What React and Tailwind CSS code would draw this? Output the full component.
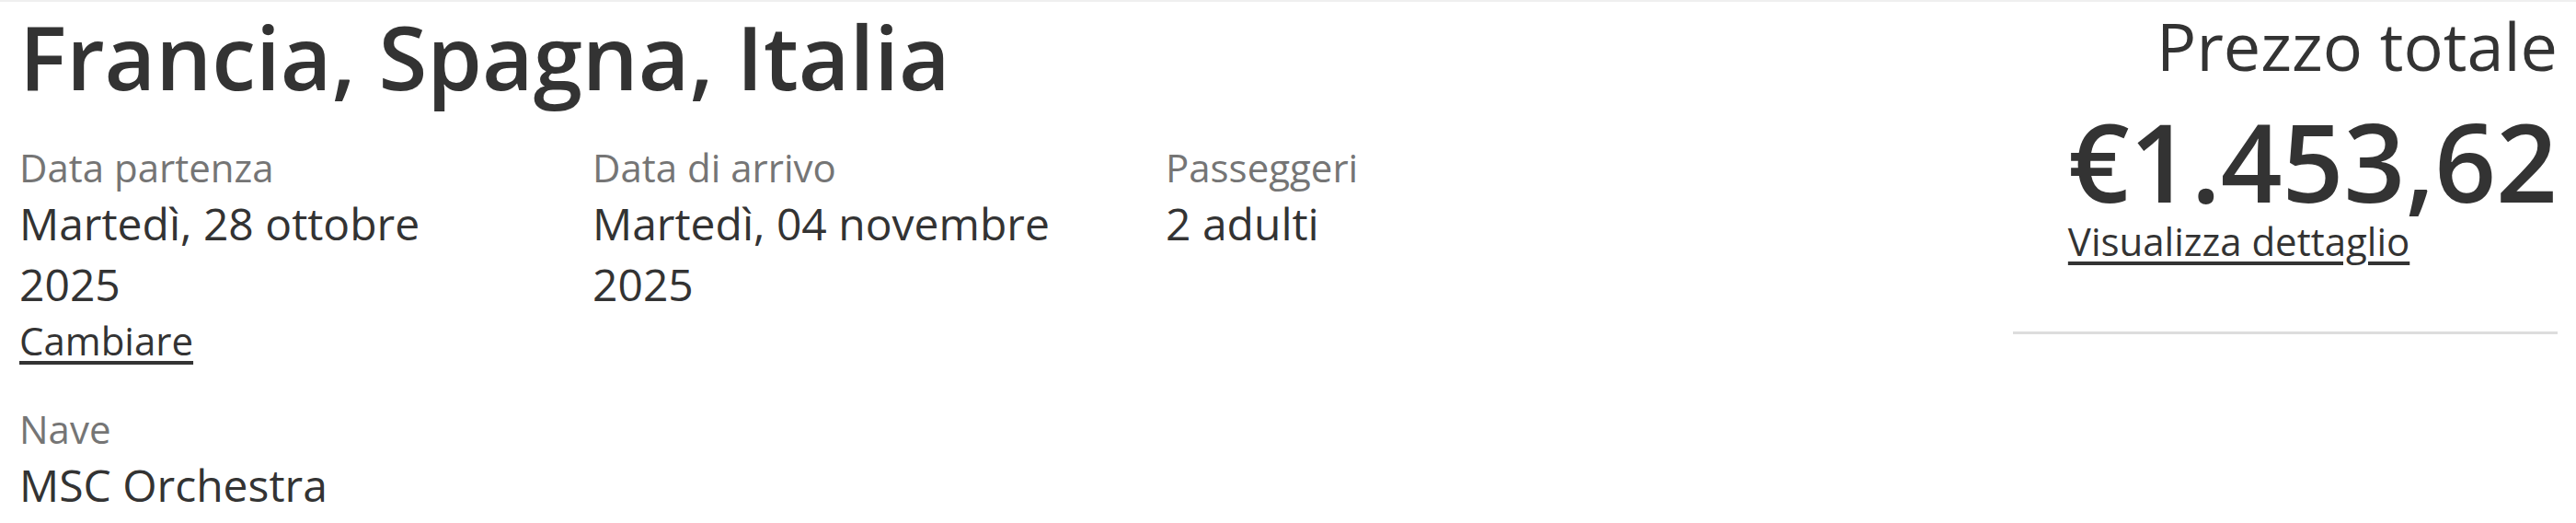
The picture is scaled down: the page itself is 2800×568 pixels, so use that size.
const details = [
  { label: "Data partenza", value: "Martedì, 28 ottobre 2025", link: "Cambiare" },
  { label: "Data di arrivo", value: "Martedì, 04 novembre 2025" },
  { label: "Passeggeri", value: "2 adulti" },
];

const App = () => {
  return (
    <div
      className="min-h-screen bg-white text-[#333333] border-t-2 border-[#efefef]"
      style={{ fontFamily: '"Open Sans", "Liberation Sans", sans-serif' }}
    >
      <div className="flex justify-between pl-[21px] pr-[20px] pt-[1px]">
        {/* LEFT */}
        <div className="flex-1">
          <h1 className="text-[96px] font-semibold leading-[1.2]">
            Francia, Spagna, Italia
          </h1>

          <div className="grid grid-cols-[623px_623px_623px] mt-[36px]">
            {details.map((d) => (
              <div key={d.label} className="pr-[90px]">
                <p className="text-[42px] leading-[56px] text-[#757575]">{d.label}</p>
                <p className="text-[48px] leading-[66px]">{d.value}</p>
                {d.link && (
                  <a href="#" className="block text-[42px] leading-[56px] underline underline-offset-[6px]">
                    {d.link}
                  </a>
                )}
              </div>
            ))}
          </div>

          <div className="mt-[40px]">
            <p className="text-[42px] leading-[56px] text-[#757575]">Nave</p>
            <p className="text-[48px] leading-[66px]">MSC Orchestra</p>
          </div>
        </div>

        {/* RIGHT */}
        <div className="w-[592px] flex flex-col items-end pt-[3px]">
          <p className="text-[72px] leading-[1.2]">Prezzo totale</p>
          <div className="mt-[24px]">
            <p className="text-[117px] font-semibold leading-none">€1.453,62</p>
            <a href="#" className="block mt-[1px] text-[42px] leading-[56px] underline underline-offset-[6px]">
              Visualizza dettaglio
            </a>
          </div>
          <div className="self-stretch h-[3px] bg-[#dddddd] mt-[70px]" />
        </div>
      </div>
    </div>
  );
};

export default App;
